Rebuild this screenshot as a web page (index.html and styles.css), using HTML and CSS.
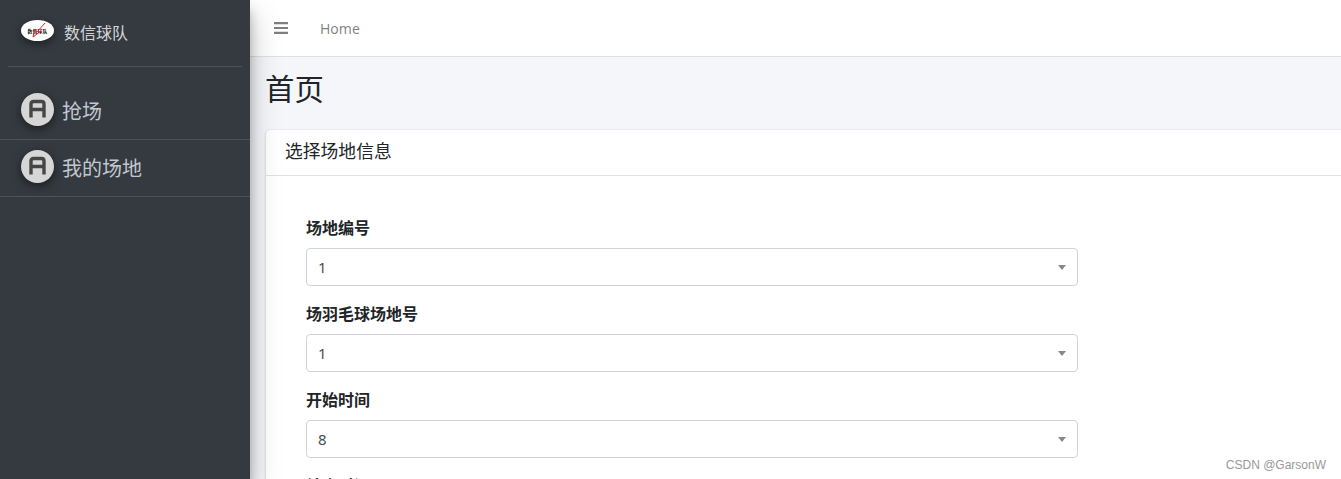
FILE: index.html
```html
<!DOCTYPE html>
<html lang="zh">
<head>
<meta charset="utf-8">
<title>首页</title>
<link rel="stylesheet" href="styles.css">
</head>
<body>
<div class="wrapper">
  <aside class="sidebar">
    <div class="brand">
      <svg class="brand-logo" width="33" height="21" viewBox="0 0 33 21">
        <ellipse cx="16.5" cy="10.5" rx="16.5" ry="10.5" fill="#fff"/>
        <text x="16.5" y="12.5" class="logo-text" text-anchor="middle">数信球队</text>
        <path d="M12 17 L14 9 L15.5 12.5 L24 3 M12 17 L20 11" fill="none" stroke="#d8232a" stroke-width="1"/>
      </svg>
      <span class="brand-text">数信球队</span>
    </div>
    <nav class="menu">
      <a class="menu-item">
        <svg class="menu-icon" width="33" height="33" viewBox="0 0 33 33">
          <circle cx="16.5" cy="16.5" r="16.5" fill="#d6d6d6"/>
          <path d="M10 24.5 V11 Q10 8.5 12.5 8.5 H20.5 Q23 8.5 23 11 V24.5 M10 16.5 H23" fill="none" stroke="#464646" stroke-width="3.4"/>
        </svg>
        <span>抢场</span>
      </a>
      <a class="menu-item">
        <svg class="menu-icon" width="33" height="33" viewBox="0 0 33 33">
          <circle cx="16.5" cy="16.5" r="16.5" fill="#d6d6d6"/>
          <path d="M10 24.5 V11 Q10 8.5 12.5 8.5 H20.5 Q23 8.5 23 11 V24.5 M10 16.5 H23" fill="none" stroke="#464646" stroke-width="3.4"/>
        </svg>
        <span>我的场地</span>
      </a>
    </nav>
  </aside>
  <main class="main">
    <header class="topbar">
      <svg class="burger" width="14" height="12" viewBox="0 0 14 12">
        <path d="M0 1.2 H14 M0 6 H14 M0 10.8 H14" stroke="#7f7f7f" stroke-width="2.2"/>
      </svg>
      <span class="home">Home</span>
    </header>
    <section class="content">
      <h1 class="title">首页</h1>
      <div class="card">
        <div class="card-header">选择场地信息</div>
        <form class="card-body">
          <div class="field">
            <label class="field-label">场地编号</label>
            <div class="select"><span>1</span><i class="caret"></i></div>
          </div>
          <div class="field">
            <label class="field-label">场羽毛球场地号</label>
            <div class="select"><span>1</span><i class="caret"></i></div>
          </div>
          <div class="field">
            <label class="field-label">开始时间</label>
            <div class="select"><span>8</span><i class="caret"></i></div>
          </div>
          <div class="field">
            <label class="field-label">结束时间</label>
            <div class="select"><span>9</span><i class="caret"></i></div>
          </div>
        </form>
      </div>
    </section>
  </main>
</div>
<div class="watermark">CSDN @GarsonW</div>
</body>
</html>
```
FILE: styles.css
```css
* { box-sizing: border-box; }
html, body { height: 479px; overflow: hidden; }
body {
  margin: 0;
  font-family: "Noto Sans", "Noto Sans CJK SC", sans-serif;
  font-size: 16px;
  color: #212529;
  background: #f4f6f9;
}
.wrapper { display: flex; height: 479px; }
.sidebar {
  width: 250px;
  flex: none;
  background: #343a40;
  position: relative;
  z-index: 2;
  box-shadow: 0 14px 28px rgba(0,0,0,.25), 0 10px 10px rgba(0,0,0,.22);
}
.brand {
  display: flex;
  align-items: center;
  height: 67px;
  margin: 0 8px;
  padding: 0 0 5px 13px;
  border-bottom: 1px solid #4b545c;
}
.brand-logo { filter: drop-shadow(0 3px 4px rgba(0,0,0,.45)); flex: none; }
.logo-text { font-size: 5px; font-weight: 700; fill: #222; font-family: "Noto Sans CJK SC", sans-serif; }
.brand-text { margin: 4px 0 0 10px; color: rgba(255,255,255,.8); font-size: 16px; line-height: 24px; }
.menu { padding-top: 16px; }
.menu-item {
  display: flex;
  align-items: center;
  height: 57px;
  padding: 0 0 1px 21px;
  color: #c2c7d0;
  font-size: 20px;
  border-bottom: 1px solid #4b545c;
}
.menu-item span { margin-left: 8px; }
.menu-icon { flex: none; margin-bottom: 2px; filter: drop-shadow(0 3px 5px rgba(0,0,0,.5)); }
.main { flex: 1; min-width: 0; overflow: hidden; }
.topbar {
  display: flex;
  align-items: center;
  height: 57px;
  padding: 0 0 1px 24px;
  background: #fff;
  border-bottom: 1px solid #dee2e6;
}
.burger { flex: none; }
.home { margin: 2px 0 0 32px; color: rgba(0,0,0,.5); font-size: 14px; }
.content { padding: 0 0 0 16px; }
.title { margin: 0 0 0 -1px; padding-top: 12px; height: 73px; font-size: 29.4px; font-weight: 400; line-height: 40px; }
.card {
  width: 1200px;
  background: #fff;
  border-radius: 4px;
  box-shadow: 0 0 1px rgba(0,0,0,.125), 0 1px 3px rgba(0,0,0,.2);
}
.card-header {
  height: 46px;
  padding: 0 19px;
  font-size: 17.8px;
  line-height: 43px;
  border-bottom: 1px solid #dee2e6;
}
.card-body { padding: 40px 40px 0; width: 852px; }
.field { height: 86px; }
.field-label { display: block; height: 32px; font-size: 16px; font-weight: 700; line-height: 24px; }
.select {
  display: flex;
  align-items: center;
  justify-content: space-between;
  height: 38px;
  padding: 0 11px 0 11px;
  background: #fff;
  border: 1px solid #ced4da;
  border-radius: 4px;
  color: #495057;
  font-size: 15px;
}
.caret { width: 0; height: 0; border-left: 4px solid transparent; border-right: 4px solid transparent; border-top: 5px solid #888; }
.watermark {
  position: absolute;
  right: 15px;
  top: 457px;
  color: #999;
  font-family: "Liberation Sans", sans-serif;
  font-size: 12px;
  line-height: 16px;
}
```
